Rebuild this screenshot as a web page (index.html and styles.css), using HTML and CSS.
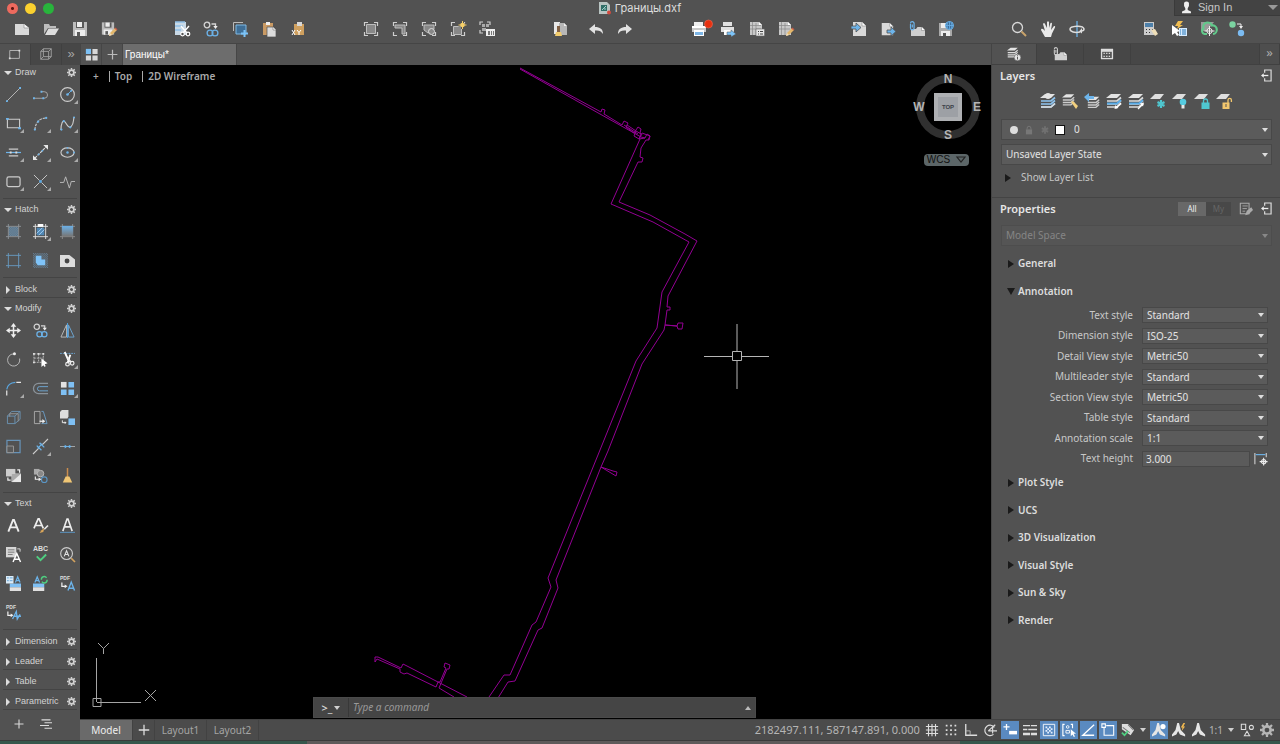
FILE: index.html
```html
<!DOCTYPE html>
<html lang="en">
<head>
<meta charset="utf-8">
<title>Границы.dxf</title>
<link rel="stylesheet" href="styles.css">
</head>
<body>
<svg class="defs" aria-hidden="true">
  <symbol id="gear" viewBox="0 0 16 16"><circle cx="8" cy="8" r="4.2" fill="none" stroke="currentColor" stroke-width="3"/><path d="M8 0v3M8 13v3M0 8h3M13 8h3M2.3 2.3l2.2 2.2M11.5 11.5l2.2 2.2M2.3 13.7l2.2-2.2M11.5 4.5l2.2-2.2" stroke="currentColor" stroke-width="2.6"/></symbol>
  <symbol id="plus" viewBox="0 0 16 16"><path d="M8 2v12M2 8h12" stroke="currentColor" stroke-width="1.5"/></symbol>
  <symbol id="new" viewBox="0 0 16 16"><path d="M1 3h9l5 4v7H1z" fill="#d9d9d9"/><path d="M10 3v4h5" fill="#f5f5f5" stroke="#888" stroke-width=".6"/></symbol>
  <symbol id="open" viewBox="0 0 16 16"><path d="M1 13V3h5l1 2h6v2H5z" fill="#bdbdbd"/><path d="M5.5 7.5H16L12 14H2z" fill="#dedede"/></symbol>
  <symbol id="save" viewBox="0 0 16 16"><path d="M1 1h14v14H1z" fill="#bcbcbc"/><path d="M4 1h8v6H4z" fill="#5a5a5a"/><path d="M5 1h5v5H5zM3 9h10v6H3z" fill="#ededed"/><path d="M5 11h3v4H5z" fill="#5a5a5a"/></symbol>
  <symbol id="pencil" viewBox="0 0 16 16"><path d="M8 15l1-3 5-5 2 2-5 5z" fill="#e3b76b"/><path d="M14 7l2 2" stroke="#c75b4a" stroke-width="1.4"/><path d="M8 15l1-3 2 2z" fill="#f2dfbd"/></symbol>
  <symbol id="saveas" viewBox="0 0 16 16"><use href="#save" width="14" height="15"/><use href="#pencil"/></symbol>
  <symbol id="cut" viewBox="0 0 16 16"><path d="M1 1h11v13H1z" fill="#c9d9e6"/><path d="M1 1h10M1 5h8M1 9h6" stroke="#8fbfe6" stroke-width="1.5"/><path d="M7 5l6 7M15 5l-6 7" stroke="#fff" stroke-width="1.4"/><circle cx="8.5" cy="13" r="1.8" fill="#525252" stroke="#fff" stroke-width="1.2"/><circle cx="14" cy="13" r="1.8" fill="#525252" stroke="#fff" stroke-width="1.2"/></symbol>
  <symbol id="copy" viewBox="0 0 16 16"><g fill="none" stroke-width="1.3"><circle cx="4" cy="4" r="2.8" stroke="#d5d5d5"/><path d="M8.500 3h4v3" stroke="#d5d5d5"/><circle cx="7" cy="12" r="2.9" stroke="#6cb2e8"/><circle cx="12" cy="12" r="2.9" stroke="#6cb2e8"/></g><path d="M10.300 5h4.400l-2.200 3z" fill="#eee"/></symbol>
  <symbol id="copybase" viewBox="0 0 16 16"><path d="M1.500 10V1.500H11" fill="none" stroke="#bbb"/><path d="M4 4h10v9H4z" fill="#3f6f97" stroke="#7fb9e4"/><path d="M12.500 9v7M9 12.500h7" stroke="#7cc3f7" stroke-width="2"/></symbol>
  <symbol id="paste" viewBox="0 0 16 16"><path d="M2 2h10v12H2z" fill="#c99a64"/><path d="M5 1h4v3H5z" fill="#eee"/><path d="M6 6h6l3 3v7H6z" fill="#dcdcdc" stroke="#525252" stroke-width=".7"/><path d="M12 6v3h3" fill="#fff" stroke="#777" stroke-width=".6"/></symbol>
  <symbol id="pastexy" viewBox="0 0 16 16"><path d="M4 3h10v11H4z" fill="#cfa05f"/><path d="M7 1h5v4H7z" fill="#d7d7d7"/><path d="M2 9l3 5M5 9l-3 5M7 9l2 2.500L11 9M9 11.500V14" stroke="#fff" stroke-width="1" fill="none"/></symbol>
  <symbol id="corners" viewBox="0 0 16 16"><path d="M1.500 5V1.500H5M11 1.500h3.500V5M14.500 11v3.500H11M5 14.500H1.500V11" fill="none" stroke="#cfcfcf" stroke-width="1.200"/></symbol>
  <symbol id="blk1" viewBox="0 0 16 16"><use href="#corners"/><path d="M3.500 3.500h9v9h-9z" fill="#888" stroke="#bdbdbd"/></symbol>
  <symbol id="blk2" viewBox="0 0 16 16"><use href="#corners"/><path d="M3 4h10v9h-3V7H3z" fill="#888" stroke="#bdbdbd"/></symbol>
  <symbol id="blk3" viewBox="0 0 16 16"><use href="#corners"/><path d="M3 4h10v4L7 12l-4-3z" fill="#888" stroke="#bdbdbd"/><circle cx="10.500" cy="10.500" r="3" fill="#888" stroke="#ddd"/></symbol>
  <symbol id="blk4" viewBox="0 0 16 16"><use href="#corners"/><path d="M3.500 5.500h8v8h-8z" fill="#888" stroke="#bdbdbd"/><path d="M12.500 0v8M8.500 4h8" stroke="#525252" stroke-width="3"/><circle cx="12.500" cy="4" r="2.300" fill="#f5cf6a"/><path d="M12.500 0v8M8.500 4h8" stroke="#f5cf6a"/></symbol>
  <symbol id="blk5" viewBox="0 0 16 16"><path d="M1 4V1h3M8 1h3v3M1 9v3h3" fill="none" stroke="#cfcfcf" stroke-width="1.200"/><path d="M3 3h3v3H3zM7 3h3v3H7zM3 7h4v3H3z" fill="#aaa"/><path d="M7 8h9v7H7z" fill="#eee"/><path d="M9 10h2v4H9zM12 10h1v4h-1zM14 10h1v4h-1z" fill="#777"/></symbol>
  <symbol id="match" viewBox="0 0 16 16"><path d="M2 1h6v12H2z" fill="#e8e8e8"/><path d="M7 2h5l3 3v9H7z" fill="#b7b7b7"/><path d="M12 2v3h3" fill="#eee"/><path d="M5 5h3v6H5z" fill="#805f43"/><path d="M4 11h5l1 4H3z" fill="#f1cb6c"/></symbol>
  <symbol id="undo" viewBox="0 0 16 16"><path d="M1 8l6-5v3c5 0 8 2 8 7-2-3-4-4-8-3.500V13z" fill="#e2e2e2"/></symbol>
  <symbol id="redo" viewBox="0 0 16 16"><path d="M15 8L9 3v3c-5 0-8 2-8 7 2-3 4-4 8-3.500V13z" fill="#e2e2e2"/></symbol>
  <symbol id="print" viewBox="0 0 16 16"><path d="M3 1h9v4H3z" fill="#eee"/><path d="M1 5h14v6H1z" fill="#c9c9c9"/><path d="M1 5h14v2H1z" fill="#fff"/><path d="M3 9h10v6H3z" fill="#fff"/><path d="M4 11h8v3H4z" fill="#7db6e6"/></symbol>
  <symbol id="printdot" viewBox="0 0 22 16"><use href="#print" width="16" height="16"/><circle cx="17.500" cy="3" r="4" fill="#e8310f" stroke="#f06b55" stroke-width=".6"/></symbol>
  <symbol id="printgo" viewBox="0 0 16 16"><path d="M3 1h9v4H3zM1 6h13v5H1z" fill="#e0e0e0"/><path d="M4 9h8v5H4z" fill="#fff"/><path d="M7 11h4V9l5 4-5 3v-2H7z" fill="#7cc3f7" stroke="#525252" stroke-width=".5"/></symbol>
  <symbol id="page" viewBox="0 0 16 16"><path d="M1 1h9l3 3v10H1z" fill="#c8c8c8"/><path d="M3.500 1v13M1 4.500h11M7 2v12M1 8h11" stroke="#888" stroke-width=".7"/><path d="M10 1v3h3" fill="#fff"/></symbol>
  <symbol id="pagesetup" viewBox="0 0 16 16"><use href="#page"/><path d="M7 8h8.500v7H7z" fill="#e8e8e8" stroke="#666" stroke-width=".6"/><path d="M9 10.500h1M9 13h1M11 10.500h3M11 13h3" stroke="#444"/></symbol>
  <symbol id="pageedit" viewBox="0 0 16 16"><use href="#page"/><use href="#pencil"/></symbol>
  <symbol id="sheet" viewBox="0 0 16 16"><path d="M2 1h9l4 4v10H2z" fill="#d9d9d9"/><path d="M11 1v4h4" fill="#fff" stroke="#888" stroke-width=".6"/></symbol>
  <symbol id="import" viewBox="0 0 16 16"><use href="#sheet"/><path d="M0 5h5V2l5 4.500L5 11V8H0z" fill="#6db4ea" stroke="#525252" stroke-width=".8"/></symbol>
  <symbol id="export" viewBox="0 0 16 16"><use href="#sheet" width="14" height="16"/><path d="M7 9h4V6l5 4.500L11 15v-3H7z" fill="#6db4ea" stroke="#525252" stroke-width=".8"/></symbol>
  <symbol id="attach" viewBox="0 0 16 16"><path d="M2 8h5l1.500-2H13l3 3v6H2z" fill="#cfcfcf"/><path d="M12.500 6v3.500H16" fill="#fff" stroke="#777" stroke-width=".5"/><path d="M1.500 3v4a1.800 1.800 0 0 0 3.600 0V2.500a1.800 1.800 0 0 0-3.600 0M3.300 3.500v3" fill="none" stroke="currentColor" stroke-width="1.200"/></symbol>
  <symbol id="saveweb" viewBox="0 0 16 16"><path d="M1 2h13v13H1z" fill="#aaa"/><path d="M3 2h6v5H3zM3 10h9v5H3z" fill="#ededed"/><path d="M5 12h3v3H5z" fill="#555"/><circle cx="11.500" cy="4.500" r="4" fill="#3c6f9d" stroke="#6db4ea"/><path d="M7.500 4.500h8M11.500.5v8M9.500 2q-1 2.500 0 5M13.500 2q1 2.500 0 5" stroke="#6db4ea" stroke-width=".8" fill="none"/></symbol>
  <symbol id="mag" viewBox="0 0 16 16"><circle cx="6.500" cy="6.500" r="5" fill="none" stroke="#d8d8d8" stroke-width="1.300"/><path d="M10.500 10.500L15 15" stroke="#c9a36b" stroke-width="2"/></symbol>
  <symbol id="hand" viewBox="0 0 16 16"><path d="M5 16L1 9q0-2 2-1l2 2-2-7q1-2 2 0l2 4V1q1-1.500 2 0v6l1.500-5q1.500-1 1.500.7L11 9l3-4q1.700-.5 1 1.500l-3 6-1 3.500z" fill="#e9e9e9"/></symbol>
  <symbol id="orbit" viewBox="0 0 16 16"><path d="M8 0v16" stroke="#6db4ea" stroke-width="1.300"/><path d="M11 11c-5 1-10 0-10-3s13-4.500 14 0c0 1-1 2-3 2" fill="none" stroke="#ddd" stroke-width="1.500"/><path d="M13 7l-3 3.500 3 2z" fill="#ddd"/></symbol>
  <symbol id="calc" viewBox="0 0 16 16"><path d="M2 1h10v13H2z" fill="#ccc"/><path d="M3 2h8v4H3z" fill="#4d80aa"/><path d="M4 8h1v1H4zM7 8h1v1H7zM4 11h1v1H4zM7 11h1v1H7zM10 8h1v1h-1z" fill="#333"/><path d="M9 9l4 6 3-2-3-5z" fill="#f0dfb8"/></symbol>
  <symbol id="qsel" viewBox="0 0 16 16"><path d="M7 0h5L9 4h3L6 8l1-3H4z" fill="#f0bd51"/><path d="M1 4v10l3-2 2 3 2-1-2-3 3-1z" fill="#fff"/><path d="M8 7h8v8H8z" fill="#d7ecff"/><path d="M9 9h1M9 11h1M9 13h1M11 9h4M11 11h4M11 13h4" stroke="#2a78b8"/></symbol>
  <symbol id="geo" viewBox="0 0 16 16"><path d="M1 1h13L7 10H1z" fill="#9a9a9a"/><path d="M7 13H4.500a3 3 0 0 1-1-5.500 4.500 4.500 0 0 1 8.500-3 3.500 3.500 0 0 1 1 8.500" fill="none" stroke="#62c98b" stroke-width="2.200"/><circle cx="9.500" cy="10" r="2.600" fill="none" stroke="#eee"/><path d="M9.500 5v10M4.500 10h10" stroke="#eee"/></symbol>
  <symbol id="compare" viewBox="0 0 16 16"><circle cx="3.500" cy="3.500" r="3.200" fill="#7bd3a0"/><circle cx="12" cy="12" r="3.200" fill="#7cbcf2"/><path d="M8 3h4v3" fill="none" stroke="#eee"/><path d="M10 5h4l-2 3z" fill="#eee"/></symbol>
  <symbol id="rectt" viewBox="0 0 16 16"><path d="M2 4h11v9H2z" fill="none" stroke="#bdbdbd"/><path d="M1 12h2v2H1zM12 3h2v2h-2z" fill="#ddd"/></symbol>
  <symbol id="cube" viewBox="0 0 16 16"><path d="M2 5h9v9H2zM5 2h9v9H5zM2 5l3-3M11 5l3-3M11 14l3-3M2 14l3-3" fill="none" stroke="currentColor"/></symbol>
  <symbol id="grid4" viewBox="0 0 16 16"><path d="M2 2h5.500v5.500H2z" fill="#7cc0f5"/><path d="M9 2h5.500v5.500H9zM2 9h5.500v5.500H2zM9 9h5.500v5.500H9z" fill="currentColor"/></symbol>
  <symbol id="line" viewBox="0 0 16 16"><path d="M1 15L15 1" stroke="#bbb"/><path d="M0 14h2v2H0zM14 0h2v2h-2z" fill="#6db4ea"/></symbol>
  <symbol id="pline" viewBox="0 0 16 16"><path d="M1 12h11a3.500 3.500 0 0 0 0-7H9" stroke="#aaa" fill="none"/><path d="M0 11h2v2H0zM10 11h2v2h-2zM8 4h2v2H8z" fill="#6db4ea"/></symbol>
  <symbol id="circle" viewBox="0 0 16 16"><circle cx="8" cy="8" r="7.300" fill="none" stroke="#ccc" stroke-width="1.200"/><path d="M8 8l4-4" stroke="#6db4ea"/><circle cx="8" cy="8" r="1.400" fill="#6db4ea"/><circle cx="12" cy="4" r="1" fill="#6db4ea"/></symbol>
  <symbol id="rect" viewBox="0 0 16 16"><path d="M1.500 3.500h13v9h-13z" fill="none" stroke="#ccc" stroke-width="1.200"/><path d="M0 2h3v2H0zM13 12h3v2h-3z" fill="#6db4ea"/></symbol>
  <symbol id="arc" viewBox="0 0 16 16"><path d="M2 15Q3 2 15 2" fill="none" stroke="#ccc" stroke-width="1.200" stroke-dasharray="3 1"/><circle cx="2" cy="14.500" r="1.200" fill="#6db4ea"/><circle cx="5.500" cy="6" r="1.200" fill="#6db4ea"/><circle cx="14" cy="2" r="1.200" fill="#6db4ea"/></symbol>
  <symbol id="spline" viewBox="0 0 16 16"><path d="M1 15C1 8 3 4 5 6s4 8 7 5 2-6 3-10" fill="none" stroke="#ccc" stroke-width="1.200"/><circle cx="1.500" cy="14.500" r="1.200" fill="#6db4ea"/><circle cx="4" cy="5.500" r="1.200" fill="#6db4ea"/><circle cx="11" cy="12" r="1.200" fill="#6db4ea"/><circle cx="15" cy="1.500" r="1" fill="#6db4ea"/></symbol>
  <symbol id="mline" viewBox="0 0 16 16"><path d="M3 4.500h10M3 11.500h10" stroke="#ccc" stroke-width="1.300"/><path d="M0 8h16" stroke="#6db4ea" stroke-width="1.300"/><path d="M4 8h2M10 8h2" stroke="#ddd" stroke-width="2"/></symbol>
  <symbol id="xline" viewBox="0 0 16 16"><path d="M2 14L14 2" stroke="#ddd" stroke-width="1.200" stroke-dasharray="3 1"/><path d="M0 16v-5l5 5zM16 0v5l-5-5z" fill="#e6e6e6"/><circle cx="6" cy="10" r="1" fill="#6db4ea"/><circle cx="10" cy="6" r="1" fill="#6db4ea"/></symbol>
  <symbol id="ellipse" viewBox="0 0 16 16"><ellipse cx="8" cy="8" rx="7" ry="5" fill="none" stroke="#ccc" stroke-width="1.200"/><circle cx="8" cy="8" r="1.300" fill="#6db4ea"/><circle cx="8" cy="3" r="1" fill="#6db4ea"/><circle cx="15" cy="8" r="1" fill="#6db4ea"/></symbol>
  <symbol id="revcloud" viewBox="0 0 16 16"><rect x="1" y="3" width="14" height="10.500" rx="2" fill="none" stroke="#ccc" stroke-width="1.300"/></symbol>
  <symbol id="cross" viewBox="0 0 16 16"><path d="M1 1l6 6M9 7l6-6M7 9l-6 6M9 9l6 6" stroke="#ccc"/><circle cx="8" cy="8" r="1.500" fill="#5aa5de"/></symbol>
  <symbol id="breakl" viewBox="0 0 16 16"><path d="M0 9h4l2-6 4 12 2-7h4" fill="none" stroke="#bbb"/></symbol>
  <symbol id="frame" viewBox="0 0 16 16"><path d="M0 2.500h16M0 13.500h16M2.500 0v16M13.500 0v16" stroke="currentColor"/></symbol>
  <pattern id="dots" width="2" height="2" patternUnits="userSpaceOnUse"><path d="M0 0h1v1H0zM1 1h1v1H1z" fill="#76aad4"/></pattern>
  <linearGradient id="fade" x2="0" y2="1"><stop stop-color="#6cb0e6"/><stop offset="1" stop-color="#777"/></linearGradient>
  <symbol id="h1" viewBox="0 0 16 16"><path d="M3 3h10v10H3z" fill="url(#dots)"/><use href="#frame" color="#8d9298"/></symbol>
  <symbol id="h2" viewBox="0 0 16 16"><path d="M4 4h8v8H4z" fill="#4f86b3"/><path d="M4 10l6-6M6 12l6-6" stroke="#a9d4f6"/><use href="#frame" color="#ddd"/><path d="M5 0h6v3H5z" fill="#fff"/></symbol>
  <symbol id="h3" viewBox="0 0 16 16"><use href="#frame" color="#8d8d8d"/><path d="M2 2h12v11H2z" fill="url(#fade)"/></symbol>
  <symbol id="h4" viewBox="0 0 16 16"><use href="#frame" color="#6699bf"/></symbol>
  <symbol id="h5" viewBox="0 0 16 16"><path d="M0 0h16v16H0z" fill="url(#dots)" opacity=".5"/><path d="M3 3h6v4h4v6H5l-2-3z" fill="#7fc3f8"/></symbol>
  <symbol id="h6" viewBox="0 0 16 16"><path d="M0 2h10l6 5v8H0z" fill="#dcdcdc"/><circle cx="7.500" cy="8.500" r="2.600" fill="#444"/></symbol>
  <symbol id="move" viewBox="0 0 16 16"><path d="M8 2v12M2 8h12" stroke="#eee" stroke-width="1.600"/><path d="M8 0l3 4H5zM8 16l3-4H5zM0 8l4-3v6zM16 8l-4-3v6z" fill="#eee"/></symbol>
  <symbol id="mirror" viewBox="0 0 16 16"><path d="M7 2v13H1z" fill="none" stroke="#bbb"/><path d="M9 2v13h6z" fill="none" stroke="#6da6d3"/><path d="M8 0v16" stroke="#4fa4e4"/></symbol>
  <symbol id="rotate" viewBox="0 0 16 16"><path d="M8 2a6.500 6.500 0 1 0 6.500 5" fill="none" stroke="#bbb"/><circle cx="9" cy="1.800" r="1.600" fill="#eee"/></symbol>
  <symbol id="stretch" viewBox="0 0 16 16"><path d="M1 2h10v9H1zM6 2v9M1 6.500h10" fill="none" stroke="#bbb" stroke-dasharray="2 1"/><path d="M9 7v9l2-2 1.500 2 1-1-1-2 3-1z" fill="#fff"/><path d="M0 1h2v2H0zM5 1h2v2H5zM10 1h2v2h-2zM0 10h2v2H0z" fill="#ddd"/></symbol>
  <symbol id="trim" viewBox="0 0 16 16"><path d="M0 1.500h16" stroke="#6da6d3" stroke-dasharray="2 1"/><path d="M5 0l5 11M11 3L8 12" stroke="#fff" stroke-width="2"/><circle cx="8" cy="13" r="1.900" fill="none" stroke="#eee" stroke-width="1.300"/><circle cx="13" cy="12" r="1.900" fill="none" stroke="#eee" stroke-width="1.300"/><path d="M8 6l4 5" stroke="#eee" stroke-width="1.500"/></symbol>
  <symbol id="fillet" viewBox="0 0 16 16"><path d="M.8 15.500V10M11 1.500h5" stroke="#e5e5e5" stroke-width="1.300"/><path d="M.8 9Q2 2 10 1.500" fill="none" stroke="#5aa5de" stroke-width="1.300"/></symbol>
  <symbol id="offset" viewBox="0 0 16 16"><path d="M16 2.500H6a5.500 5.500 0 0 0 0 11h10" fill="none" stroke="#8a9299" stroke-width="1.400"/><path d="M16 6H7a2.200 2.200 0 0 0 0 4.500h9" fill="none" stroke="#6da6d3"/></symbol>
  <symbol id="array" viewBox="0 0 16 16"><path d="M1 1h6v6H1z" fill="#e3e3e3"/><path d="M9 1h6v6H9zM1 9h6v6H1zM9 9h6v6H9z" fill="#7fc0f4"/></symbol>
  <symbol id="box3" viewBox="0 0 16 16"><path d="M1.500 6.500h8v8h-8zM1.500 6.500L6 1.500h9l-5.500 5M15 1.500V10l-5.500 4.500" fill="none" stroke="#6c93b3"/><path d="M4 7V4h9v8" fill="none" stroke="#999"/></symbol>
  <symbol id="door" viewBox="0 0 16 16"><path d="M1.500 1.500h6v13h-6z" fill="none" stroke="#aaa"/><path d="M9 1.500h2l4 13H9" fill="none" stroke="#6b9cc3"/><path d="M7 12h5" stroke="#eee" stroke-width="1.300"/><path d="M10 9.500l3 2.500-3 2.500z" fill="#eee"/></symbol>
  <symbol id="boxes" viewBox="0 0 16 16"><path d="M0 2l2-2h7v7l-1 2H0z" fill="#ddd"/><path d="M9 9h7v7H9z" fill="#7fc0f4"/><path d="M2.500 11v2.500H6" stroke="#eee" fill="none"/><path d="M5 12l2 1.500L5 15z" fill="#eee"/></symbol>
  <symbol id="scale" viewBox="0 0 16 16"><path d="M1 1.500h14v13H1z" fill="none" stroke="#6793b8" stroke-width="1.300"/><path d="M1 7.500h7v7H1z" fill="#5a5a5a" stroke="#999"/></symbol>
  <symbol id="break" viewBox="0 0 16 16"><path d="M0 16l6-6M10 6l6-6" stroke="#ccc" stroke-width="1.200"/><path d="M4 7l5 5M7 4l5 5M5 10l5-5" stroke="#6db4ea" stroke-width="1.300"/></symbol>
  <symbol id="join" viewBox="0 0 16 16"><path d="M0 8h5M11 8h5" stroke="#aaa"/><path d="M5 6l3 2-3 2zM11 6L8 8l3 2z" fill="#6db4ea"/><path d="M4 8h8" stroke="#6db4ea"/></symbol>
  <symbol id="fliph" viewBox="0 0 16 16"><path d="M0 1h10v8H0z" fill="#ccc"/><path d="M6 6h10v9H6z" fill="#e8e8e8"/><path d="M6 6h10L6 15" fill="#aaa"/><path d="M12 2h2.500v3M2 10v3h3" stroke="#eee" fill="none" stroke-width="1.300"/></symbol>
  <symbol id="ovl" viewBox="0 0 16 16"><path d="M1 1h6v6H1z" fill="#aaa"/><circle cx="8" cy="6" r="3.500" fill="#888" stroke="#bbb"/><circle cx="12" cy="12.500" r="3" fill="none" stroke="#5a95c4" stroke-width="1.200"/><path d="M2.500 9v3H7" stroke="#eee" fill="none" stroke-width="1.200"/><path d="M6 10l3 2-3 2z" fill="#eee"/></symbol>
  <symbol id="broom" viewBox="0 0 16 16"><path d="M8 0v10" stroke="#c98c4d" stroke-width="1.600"/><path d="M6 9h4l3 6.500H3z" fill="#f0c675"/></symbol>
  <symbol id="tA" viewBox="0 0 16 16"><path d="M2.500 14.500L7.500 2h1l5 12.500M4.500 10h7" fill="none" stroke="#eee" stroke-width="2"/></symbol>
  <symbol id="tAbrush" viewBox="0 0 16 16"><path d="M1 11L5.500 1h1L11 11M2.500 8h7" fill="none" stroke="#eee" stroke-width="1.800"/><path d="M16 8l-4 4" stroke="#e8e8e8" stroke-width="1.800"/><path d="M12 11l-1 4-4 1 2-3z" fill="#d9a55a"/></symbol>
  <symbol id="tAline" viewBox="0 0 16 16"><path d="M3 14L7.500 1h1L13 14M4.500 9.500h7" fill="none" stroke="#eee" stroke-width="1.700"/><path d="M0 15.300h16" stroke="#5a95c4"/></symbol>
  <symbol id="tdoc" viewBox="0 0 16 16"><path d="M0 0h11v11H0z" fill="#d6d6d6"/><path d="M2 3h7M2 5.500h7M2 8h5" stroke="#777"/><path d="M12 2h3v3" stroke="#ddd" fill="none"/><path d="M7.500 16l4-9 4 9M9 13h5" fill="none" stroke="#fff" stroke-width="1.500"/></symbol>
  <symbol id="check" viewBox="0 0 16 16"><path d="M4 10l4 4 6-6" fill="none" stroke="#4fcf80" stroke-width="2"/></symbol>
  <symbol id="findA" viewBox="0 0 16 16"><circle cx="7" cy="7" r="6.300" fill="none" stroke="#ccc" stroke-width="1.200"/><path d="M4.500 10L7 4l2.500 6M5.500 8h3" fill="none" stroke="#ddd" stroke-width="1.200"/><path d="M12 12l4 4" stroke="#d4a35e" stroke-width="1.800"/></symbol>
  <symbol id="fieldA" viewBox="0 0 16 16"><path d="M4 8h12v4H4z" fill="#7fc0f4"/><path d="M4 12h12v4H4z" fill="#e0e0e0"/><path d="M0 0h8v8H0z" fill="#dcecf8"/><path d="M1 2h2M1 5h2M4 2h3M4 5h3" stroke="#5f9fd2"/><path d="M10 7l2.500-6L15 7M11 5h3" stroke="#6db4ea" stroke-width="1.300" fill="none"/></symbol>
  <symbol id="updA" viewBox="0 0 16 16"><path d="M0 8h12v4H0z" fill="#7fc0f4"/><path d="M0 12h12v4H0z" fill="#e0e0e0"/><path d="M2 7l2.500-6L7 7M3 5h3" stroke="#6db4ea" stroke-width="1.300" fill="none"/><path d="M9 4a3 3 0 0 1 5.500-2M15 4a3 3 0 0 1-5.500 2" fill="none" stroke="#4fcf80" stroke-width="1.500"/></symbol>
  <symbol id="pdfA" viewBox="0 0 16 16"><path d="M2 7v4h4" stroke="#eee" fill="none" stroke-width="1.300"/><path d="M5 9l3 2-3 2z" fill="#eee"/><path d="M8.500 15.500L12 6.500l3.500 9M10 13h4" fill="none" stroke="#6db4ea" stroke-width="1.500"/></symbol>
  <symbol id="pdfB" viewBox="0 0 16 16"><path d="M2 7v4h4" stroke="#eee" fill="none" stroke-width="1.300"/><path d="M5 9l3 2-3 2z" fill="#eee"/><path d="M7 15l4-8 1 8 3-5M8 12h8" fill="none" stroke="#6db4ea" stroke-width="1.400"/></symbol>
  <symbol id="lines" viewBox="0 0 16 16"><path d="M2 2.500h12M6 6.300h10M0 10h12M6 13.700h10" stroke="#ddd" stroke-width="1.500"/></symbol>
  <symbol id="stk" viewBox="0 0 16 16"><path d="M5 1h10l-4 4H0z" fill="#e3e3e3"/><path d="M1 8h10l4-3.500M1 11h10l4-3.500M1 14h10l4-3.500" fill="none" stroke="currentColor" stroke-width="1.700"/></symbol>
  <symbol id="layinfo" viewBox="0 0 16 16"><use href="#stk" width="13" height="13" color="#ddd"/><circle cx="12" cy="12" r="3.800" fill="#e3e3e3" stroke="#525252" stroke-width=".6"/><path d="M12 9.500v1M12 11.300v3" stroke="#444"/></symbol>
  <symbol id="table" viewBox="0 0 16 16"><path d="M1 2h14v12H1z" fill="#ddd"/><path d="M2.500 5.500h11v7h-11z" fill="#555"/><path d="M4 6.500h1.500V8H4zM7 6.500h1.500V8H7zM10 6.500h1.500V8H10zM4 10h1.500v1.500H4zM7 10h1.500v1.500H7zM10 10h1.500v1.500H10z" fill="#ddd"/></symbol>
  <symbol id="dock" viewBox="0 0 12 14"><path d="M4 4V1h7v12H4v-3" fill="none" stroke="#ddd" stroke-width="1.300"/><path d="M2 7h6" stroke="#eee" stroke-width="1.400"/><path d="M0 7l3-2.500v5z" fill="#eee"/></symbol>
  <symbol id="l1" viewBox="0 0 16 16"><use href="#stk" color="#8ec5f1"/><circle cx="8" cy="3" r="3" fill="#e5e5e5"/><path d="M1 14h10l4-3.500" fill="none" stroke="#ddd" stroke-width="1.500"/></symbol>
  <symbol id="l2" viewBox="0 0 16 16"><use href="#stk" color="#ccc" width="13" height="14"/><path d="M9 9l2-1 5 5-2 3z" fill="#f1cf7e"/></symbol>
  <symbol id="l3" viewBox="0 0 16 16"><use href="#stk" color="#ccc" x="3" y="3" width="13" height="13"/><path d="M0 4l5-4v3h5v3H5v3z" fill="#6db4ea"/></symbol>
  <symbol id="l4" viewBox="0 0 16 16"><use href="#stk" color="#ddd"/><path d="M1 10.500h10l4-3.500" fill="none" stroke="#5aaeea" stroke-width="1.800"/><path d="M15 10l-5 5" stroke="#fff" stroke-width="1.300"/><path d="M8.500 16l1-4 3 3z" fill="#fff"/></symbol>
  <symbol id="l5" viewBox="0 0 16 16"><use href="#stk" color="#ddd"/><path d="M1 10.500h10l4-3.500" fill="none" stroke="#5aaeea" stroke-width="1.800"/><path d="M10 16l5-5" stroke="#fff" stroke-width="1.300"/><path d="M16 9.500l-1 4-3-3z" fill="#fff"/></symbol>
  <symbol id="sheetl" viewBox="0 0 16 16"><path d="M5 1h9l-4 5H0z" fill="#dedede"/></symbol>
  <symbol id="l6" viewBox="0 0 16 16"><use href="#sheetl"/><path d="M11 7v8M7.500 9l7 4M14.500 9l-7 4" stroke="#4fc6cf" stroke-width="2.200"/></symbol>
  <symbol id="l7" viewBox="0 0 16 16"><use href="#sheetl"/><circle cx="11" cy="9" r="3.300" fill="#55cbe0"/><path d="M9.500 12h3v3.500h-3z" fill="#e8e8e8"/></symbol>
  <symbol id="l8" viewBox="0 0 16 16"><use href="#sheetl"/><path d="M7.500 9.500h8V16h-8z" fill="#4fc6cf"/><path d="M9.500 10V8a2 2 0 0 1 4 0v2" fill="none" stroke="#4fc6cf" stroke-width="1.300"/></symbol>
  <symbol id="l9" viewBox="0 0 16 16"><use href="#sheetl"/><path d="M6.500 9.500h7V16h-7z" fill="#f2c66d"/><path d="M12 10V7a1.700 1.700 0 0 1 3.400 0v2" fill="none" stroke="#f2c66d" stroke-width="1.300"/><path d="M9.500 11h1v3h-1z" fill="#555"/></symbol>
  <symbol id="lock" viewBox="0 0 16 16"><path d="M3 7h10v8H3z" fill="#777"/><path d="M5 7V5a3 3 0 0 1 6 0v2" fill="none" stroke="#777" stroke-width="1.500"/></symbol>
  <symbol id="snow" viewBox="0 0 16 16"><path d="M8 2v12M3 5l10 6M13 5L3 11" stroke="#707070" stroke-width="3"/></symbol>
  <symbol id="list" viewBox="0 0 16 16"><path d="M1.500 1.500h10v12h-10z" fill="none" stroke="#aaa" stroke-width="1.200"/><path d="M4 4.500h6M4 7.500h5M4 10.500h3" stroke="#aaa"/><path d="M7 15l2-5 5-4 2 3-5 5z" fill="#aaa"/></symbol>
  <symbol id="pick" viewBox="0 0 16 16"><path d="M1 1v13M14 1v5" stroke="#ccc" stroke-width="1.300"/><path d="M2 3h11" stroke="#6db4ea" stroke-width="1.300"/><circle cx="11" cy="11" r="2.500" fill="none" stroke="#eee" stroke-width="1.200"/><path d="M11 6.500v9M6.500 11h9" stroke="#eee" stroke-width="1.200"/></symbol>
  <symbol id="s1" viewBox="0 0 16 16"><path d="M4 1v14M8 1v14M12 1v14M1 4h14M1 8h14M1 12h14" stroke="#ddd" stroke-width="1.300"/></symbol>
  <symbol id="s2" viewBox="0 0 16 16"><path d="M2 3h13M2 8h13M2 13h13" stroke="#ddd" stroke-width="2" stroke-dasharray="2 3"/></symbol>
  <symbol id="s3" viewBox="0 0 16 16"><path d="M2 1v13h13" fill="none" stroke="#ddd" stroke-width="1.500"/><path d="M2 9h5v5" fill="none" stroke="#bbb"/></symbol>
  <symbol id="s4" viewBox="0 0 16 16"><path d="M12 13a6 6 0 1 1 1-8M6 9h10M6 9l8-7M11 5v7" fill="none" stroke="#ddd" stroke-width="1.300"/></symbol>
  <symbol id="s5" viewBox="0 0 16 16"><path d="M4 1v7M.5 4.500h7" stroke="#fff" stroke-width="1.500"/><path d="M7 9h9v4H7z" fill="#fff"/></symbol>
  <symbol id="s6" viewBox="0 0 16 16"><path d="M0 3h8M9 3h7M0 7.500h5M6 7.500h10" stroke="#ddd" stroke-width="1.700"/><path d="M0 12.500h8M9 12.500h7" stroke="#ddd" stroke-width="3"/></symbol>
  <symbol id="s7" viewBox="0 0 16 16"><path d="M1.500 1.500h13v13h-13z" fill="none" stroke="#fff"/><path d="M4 4h2v2H4zM8 4h2v2H8zM6 6h2v2H6zM10 6h2v2h-2zM4 8h2v2H4zM8 8h2v2H8zM6 10h2v2H6zM10 10h2v2h-2z" fill="#e4efff"/></symbol>
  <symbol id="s8" viewBox="0 0 16 16"><path d="M3 1.500H1v13h2M10 1.500h2V6" fill="none" stroke="#fff" stroke-width="1.300"/><circle cx="6.500" cy="4.500" r="1.500" fill="none" stroke="#fff"/><path d="M4.500 8.500h4v3h-4z" fill="none" stroke="#fff"/><path d="M10 7v8l2-2 1.500 3 1.300-.6-1.500-3H16z" fill="#fff"/></symbol>
  <symbol id="s9" viewBox="0 0 16 16"><path d="M15 2L2 14h13" fill="none" stroke="#fff" stroke-width="1.500"/></symbol>
  <symbol id="s10" viewBox="0 0 16 16"><path d="M3.500 5v9h11V3H6M1 1h4v4H1z" fill="none" stroke="#fff" stroke-width="1.200"/></symbol>
  <symbol id="tag" viewBox="0 0 16 16"><path d="M1 1h7l7 7-4 6L1 7z" fill="#ddd"/><path d="M2 5l8 6M8 2l6 6" stroke="#777" stroke-width="1.200"/><path d="M1 11l3 3 4-5" fill="none" stroke="#4fcf80" stroke-width="2"/></symbol>
  <symbol id="ann" viewBox="0 0 16 16"><path d="M6 0h2l2 8 5 5v2.500L9 13l-2-4-2 4-5 2.500V13l4-5z" fill="#e6e6e6"/></symbol>
  <symbol id="annc" viewBox="0 0 16 16"><use href="#ann"/><circle cx="12.500" cy="4" r="3" fill="#fff"/></symbol>
  <symbol id="annb" viewBox="0 0 16 16"><use href="#ann"/><path d="M13 0l-3 5h2l-1 4 4-5h-2l2-4z" fill="#f0b850"/></symbol>
  <symbol id="shapes" viewBox="0 0 16 16"><path d="M1.500 1.500h5v6h-5zM5 14.500l3-5 3 5z" fill="none" stroke="#ddd" stroke-width="1.200"/><circle cx="13" cy="5" r="2.300" fill="none" stroke="#ddd" stroke-width="1.200"/></symbol>
  <symbol id="user" viewBox="0 0 16 16"><path d="M5 2q3-3 6 0v4L9.500 9v2l4 2v2h-11v-2l4-2V9L5 6z" fill="#eee"/></symbol>
  <symbol id="dxf" viewBox="0 0 12 14"><path d="M0 1h8l3 3v9H0z" fill="#b8c4c2"/><path d="M2 4h6v6H2z" fill="#2f6d67"/><path d="M3 9l4-4M5 8h2" stroke="#9fd0c9"/><circle cx="10" cy="11.500" r="2" fill="#d14b40"/></symbol>
</svg>

<header class="top">
  <div class="titlebar">
    <div class="lights"><button class="light red" aria-label="Close"></button><button class="light yellow" aria-label="Minimise"></button><button class="light green" aria-label="Zoom"></button></div>
    <h1 class="title"><svg class="dxf"><use href="#dxf"/></svg>Границы.dxf</h1>
    <button class="signin"><svg class="i12"><use href="#user"/></svg><span>Sign In</span><i class="caret big"></i></button>
  </div>
  <nav class="toolbar" aria-label="Main toolbar">
    <div class="group"><button aria-label="New"><svg><use href="#new"/></svg></button><button aria-label="Open"><svg><use href="#open"/></svg></button><button aria-label="Save"><svg><use href="#save"/></svg></button><button aria-label="Save as"><svg><use href="#saveas"/></svg></button></div>
    <div class="group"><button aria-label="Cut"><svg><use href="#cut"/></svg></button><button aria-label="Copy"><svg><use href="#copy"/></svg></button><button aria-label="Copy with base"><svg><use href="#copybase"/></svg></button><button aria-label="Paste"><svg><use href="#paste"/></svg></button><button aria-label="Paste to coordinates"><svg><use href="#pastexy"/></svg></button></div>
    <div class="group"><button aria-label="Create block"><svg><use href="#blk1"/></svg></button><button aria-label="Edit block"><svg><use href="#blk2"/></svg></button><button aria-label="Reference"><svg><use href="#blk3"/></svg></button><button aria-label="New block"><svg><use href="#blk4"/></svg></button><button aria-label="Attributes"><svg><use href="#blk5"/></svg></button></div>
    <div class="group split"><button aria-label="Match properties"><svg><use href="#match"/></svg></button><div class="group"><button aria-label="Undo"><svg><use href="#undo"/></svg></button><button aria-label="Redo"><svg><use href="#redo"/></svg></button></div></div>
    <div class="group"><button aria-label="Print"><svg class="wide"><use href="#printdot"/></svg></button><button aria-label="Batch print"><svg><use href="#printgo"/></svg></button><button aria-label="Page setup"><svg><use href="#pagesetup"/></svg></button><button aria-label="Edit page"><svg><use href="#pageedit"/></svg></button></div>
    <div class="group blue"><button aria-label="Import"><svg><use href="#import"/></svg></button><button aria-label="Export"><svg><use href="#export"/></svg></button><button aria-label="Attach"><svg><use href="#attach"/></svg></button><button aria-label="Save to web"><svg><use href="#saveweb"/></svg></button></div>
    <div class="group"><button aria-label="Zoom"><svg><use href="#mag"/></svg></button><button aria-label="Pan"><svg><use href="#hand"/></svg></button><button aria-label="Orbit"><svg><use href="#orbit"/></svg></button></div>
    <div class="group"><button aria-label="Calculator"><svg><use href="#calc"/></svg></button><button aria-label="Quick select"><svg><use href="#qsel"/></svg></button><button aria-label="Geographic link"><svg><use href="#geo"/></svg></button><button aria-label="Compare"><svg><use href="#compare"/></svg></button></div>
  </nav>
</header>

<main class="work">
  <aside class="palette">
    <div class="ptabs"><button class="on" aria-label="Drafting"><svg><use href="#rectt"/></svg></button><button aria-label="Modelling"><svg><use href="#cube"/></svg></button><button class="more" aria-label="More">»</button></div>
    <section class="sec first"><h2><i class="tri down"></i>Draw<svg><use href="#gear"/></svg></h2>
      <div class="tools"><button aria-label="Line"><svg><use href="#line"/></svg></button><button aria-label="Polyline"><svg><use href="#pline"/></svg></button><button class="m" aria-label="Circle"><svg><use href="#circle"/></svg></button><button class="m" aria-label="Rectangle"><svg><use href="#rect"/></svg></button><button class="m" aria-label="Arc"><svg><use href="#arc"/></svg></button><button class="m" aria-label="Spline"><svg><use href="#spline"/></svg></button><button class="m" aria-label="Multiline"><svg><use href="#mline"/></svg></button><button class="m" aria-label="Ray"><svg><use href="#xline"/></svg></button><button class="m" aria-label="Ellipse"><svg><use href="#ellipse"/></svg></button><button class="m" aria-label="Revision cloud"><svg><use href="#revcloud"/></svg></button><button class="m" aria-label="Point"><svg><use href="#cross"/></svg></button><button aria-label="Break line"><svg><use href="#breakl"/></svg></button></div></section>
    <section class="sec"><h2><i class="tri down"></i>Hatch<svg><use href="#gear"/></svg></h2>
      <div class="tools"><button aria-label="Hatch"><svg><use href="#h1"/></svg></button><button class="m" aria-label="Edit hatch"><svg><use href="#h2"/></svg></button><button aria-label="Gradient"><svg><use href="#h3"/></svg></button><button aria-label="Boundary"><svg><use href="#h4"/></svg></button><button aria-label="Region"><svg><use href="#h5"/></svg></button><button aria-label="Wipeout"><svg><use href="#h6"/></svg></button></div></section>
    <section class="sec closed"><h2><i class="tri"></i>Block<svg><use href="#gear"/></svg></h2></section>
    <section class="sec"><h2><i class="tri down"></i>Modify<svg><use href="#gear"/></svg></h2>
      <div class="tools"><button aria-label="Move"><svg><use href="#move"/></svg></button><button aria-label="Copy"><svg><use href="#copy"/></svg></button><button aria-label="Mirror"><svg><use href="#mirror"/></svg></button><button aria-label="Rotate"><svg><use href="#rotate"/></svg></button><button aria-label="Stretch"><svg><use href="#stretch"/></svg></button><button class="m" aria-label="Trim"><svg><use href="#trim"/></svg></button><button class="m" aria-label="Fillet"><svg><use href="#fillet"/></svg></button><button aria-label="Offset"><svg><use href="#offset"/></svg></button><button class="m" aria-label="Array"><svg><use href="#array"/></svg></button><button aria-label="Solid edit"><svg><use href="#box3"/></svg></button><button aria-label="Extend"><svg><use href="#door"/></svg></button><button aria-label="Align"><svg><use href="#boxes"/></svg></button><button aria-label="Scale"><svg><use href="#scale"/></svg></button><button class="m" aria-label="Break"><svg><use href="#break"/></svg></button><button aria-label="Join"><svg><use href="#join"/></svg></button><button aria-label="Reverse"><svg><use href="#fliph"/></svg></button><button aria-label="Overkill"><svg><use href="#ovl"/></svg></button><button aria-label="Purge"><svg><use href="#broom"/></svg></button></div></section>
    <section class="sec"><h2><i class="tri down"></i>Text<svg><use href="#gear"/></svg></h2>
      <div class="tools"><button aria-label="Text"><svg><use href="#tA"/></svg></button><button aria-label="Text style"><svg><use href="#tAbrush"/></svg></button><button aria-label="Single line"><svg><use href="#tAline"/></svg></button><button aria-label="Multiline text"><svg><use href="#tdoc"/></svg></button><button class="lab" aria-label="Spelling"><span class="abc">ABC</span><svg><use href="#check"/></svg></button><button aria-label="Find"><svg><use href="#findA"/></svg></button><button aria-label="Field"><svg><use href="#fieldA"/></svg></button><button aria-label="Update field"><svg><use href="#updA"/></svg></button><button class="lab" aria-label="PDF text"><span>PDF</span><svg><use href="#pdfA"/></svg></button><button class="lab" aria-label="PDF recognition"><span>PDF</span><svg><use href="#pdfB"/></svg></button></div></section>
    <section class="sec closed"><h2><i class="tri"></i>Dimension<svg><use href="#gear"/></svg></h2></section>
    <section class="sec closed"><h2><i class="tri"></i>Leader<svg><use href="#gear"/></svg></h2></section>
    <section class="sec closed"><h2><i class="tri"></i>Table<svg><use href="#gear"/></svg></h2></section>
    <section class="sec closed"><h2><i class="tri"></i>Parametric<svg><use href="#gear"/></svg></h2></section>
    <div class="pfoot"><button aria-label="Add"><svg><use href="#plus"/></svg></button><button aria-label="Options"><svg><use href="#lines"/></svg></button></div>
  </aside>

  <div class="doctabs"><button class="start" aria-label="Start"><svg><use href="#grid4"/></svg></button><button class="add" aria-label="New tab"><svg><use href="#plus"/></svg></button><button class="doc">Границы*</button></div>

  <div class="canvas">
    <svg class="drawing" viewBox="80 65 911 654" preserveAspectRatio="xMinYMin slice" aria-label="Site boundary drawing">
      <g fill="none" stroke="#930093">
        <path d="M520 68l81 44 1-3 3 1-1 4 18 11 2-4 4 2-2 4 8 6 4-6 3 2-1 4 2 1-3 5 6-1 2-4 3 2-1 4-3 0-5 8-1 9 3 1-1 4-4 0-19 40 31 13 35 19 12 7-29 55-1 11 3 0 0 3-3 0-2 15 12 1 1-3 5 0 -1 6 -4 0-1-3-12-1-1 5-22 34-34 87-7 16 12 4 4 1-1 4-15-9-45 113 2 8-16 40-4 2-23 51-7 1-10 16"/>
        <path d="M520 69l80 45 34 19 7 4 4 1M624 125l14 9M627 125l9 6M636 131l5 3-2 5-5-3zM642 133l8 3-2 4M640 139l-29 65 42 18 36 20-27 50-5 36-21 33-36 89-52 128 3 9-15 35-4 3-22 50h-6l-15 22"/>
        <path d="M375 657l3 0 23 11 2-4 4 2 60 31M375 657v5l2-3 23 10v3l4 2 3-1 29 14 2-5h2l6-14-2-1 1-4 5 2-1 4h-2l-8 19 15 9"/>
      </g>
      <path d="M737 324v27M737 361v28M704 356.500h28M742 356.500h27M732.500 351.500h9v9h-9z" fill="none" stroke="#b5b5b5"/>
      <path d="M96.500 658v44M97 702.500h44M93 698.500h8v8h-8zM98 643l5.500 5.500L109 643M103.500 648.500V654M145 690l11 11M156 690l-11 11" fill="none" stroke="#a5a5a5"/>
    </svg>
    <div class="vlabels"><button>+</button><button>Top</button><button>2D Wireframe</button></div>
    <div class="compass"><span class="n">N</span><span class="w">W</span><span class="top-face">TOP</span><span class="e">E</span><span class="s">S</span></div>
    <button class="wcs">WCS<svg viewBox="0 0 10 8"><path d="M1 1h8L5 6z" fill="none" stroke="#222" stroke-width="1.200"/></svg></button>
    <form class="cmd"><button type="button" class="prompt">&gt;_<i class="caret"></i></button><input aria-label="Command" placeholder="Type a command"><button type="button" class="hist" aria-label="History"><i class="caret up"></i></button></form>
  </div>

  <aside class="panel">
    <div class="rtabs"><button class="on" aria-label="Layers"><svg><use href="#layinfo"/></svg></button><button aria-label="References"><svg><use href="#attach"/></svg></button><button aria-label="Sheets"><svg><use href="#table"/></svg></button><span></span><button class="more" aria-label="More">»</button></div>
    <section class="layers">
      <div class="head"><h2>Layers</h2><button aria-label="Undock layers"><svg class="dock"><use href="#dock"/></svg></button></div>
      <div class="ltools"><button aria-label="Layer states"><svg><use href="#l1"/></svg></button><button aria-label="Match"><svg><use href="#l2"/></svg></button><button aria-label="Previous"><svg><use href="#l3"/></svg></button><button aria-label="Isolate"><svg><use href="#l4"/></svg></button><button aria-label="Unisolate"><svg><use href="#l5"/></svg></button><button aria-label="Freeze"><svg><use href="#l6"/></svg></button><button aria-label="Off"><svg><use href="#l7"/></svg></button><button aria-label="Lock"><svg><use href="#l8"/></svg></button><button aria-label="Unlock"><svg><use href="#l9"/></svg></button></div>
      <div class="drop tall layer"><i class="bulb"></i><svg><use href="#lock"/></svg><svg><use href="#snow"/></svg><i class="swatch"></i><select aria-label="Current layer"><option>0</option></select></div>
      <div class="drop tall"><select aria-label="Layer state"><option>Unsaved Layer State</option></select></div>
      <button class="showlist"><i class="tri"></i>Show Layer List</button>
    </section>
    <section class="props">
      <div class="head"><h2>Properties</h2><div class="seg"><button class="on">All</button><button>My</button></div><button aria-label="Quick list"><svg class="i14"><use href="#list"/></svg></button><button aria-label="Undock properties"><svg class="dock"><use href="#dock"/></svg></button></div>
      <div class="drop tall off"><select aria-label="Selection" disabled><option>Model Space</option></select></div>
      <div class="folds two"><h3><i class="tri"></i>General</h3><h3><i class="tri down"></i>Annotation</h3></div>
      <div class="rows">
        <label for="f1">Text style</label><div class="drop"><select id="f1"><option>Standard</option></select></div>
        <label for="f2">Dimension style</label><div class="drop"><select id="f2"><option>ISO-25</option></select></div>
        <label for="f3">Detail View style</label><div class="drop"><select id="f3"><option>Metric50</option></select></div>
        <label for="f4">Multileader style</label><div class="drop"><select id="f4"><option>Standard</option></select></div>
        <label for="f5">Section View style</label><div class="drop"><select id="f5"><option>Metric50</option></select></div>
        <label for="f6">Table style</label><div class="drop"><select id="f6"><option>Standard</option></select></div>
        <label for="f7">Annotation scale</label><div class="drop"><select id="f7"><option>1:1</option></select></div>
        <label for="f8">Text height</label><div class="height"><input id="f8" value="3.000"><button aria-label="Pick height"><svg class="i14"><use href="#pick"/></svg></button></div>
      </div>
      <div class="folds six"><h3><i class="tri"></i>Plot Style</h3><h3><i class="tri"></i>UCS</h3><h3><i class="tri"></i>3D Visualization</h3><h3><i class="tri"></i>Visual Style</h3><h3><i class="tri"></i>Sun &amp; Sky</h3><h3><i class="tri"></i>Render</h3></div>
    </section>
  </aside>

  <footer class="status">
    <button class="lt on">Model</button><button class="lt plus" aria-label="Add layout"><svg><use href="#plus"/></svg></button><button class="lt">Layout1</button><button class="lt">Layout2</button>
    <output class="coords">2182497.111, 587147.891, 0.000</output>
    <div class="toggles"><button aria-label="Grid"><svg><use href="#s1"/></svg></button><button aria-label="Snap"><svg><use href="#s2"/></svg></button><button aria-label="Ortho"><svg><use href="#s3"/></svg></button><button aria-label="Polar"><svg><use href="#s4"/></svg></button><button class="on" aria-label="Dynamic input"><svg><use href="#s5"/></svg></button><button aria-label="Lineweight"><svg><use href="#s6"/></svg></button><button class="on" aria-label="Transparency"><svg><use href="#s7"/></svg></button><button class="on" aria-label="Selection cycling"><svg><use href="#s8"/></svg></button><button class="on" aria-label="Object tracking"><svg><use href="#s9"/></svg></button><button class="on" aria-label="Object snap"><svg><use href="#s10"/></svg></button></div>
    <div class="extra"><button aria-label="Monitor"><svg><use href="#tag"/></svg></button><i class="caret"></i></div>
    <div class="anno"><button class="on" aria-label="Annotation visibility"><svg><use href="#annc"/></svg></button><button aria-label="Auto scale"><svg><use href="#annb"/></svg></button><button aria-label="Scale"><svg><use href="#ann"/></svg></button></div>
    <button class="ratio">1:1<i class="caret"></i></button>
    <div class="anno"><button aria-label="Isolate objects"><svg><use href="#shapes"/></svg></button><button aria-label="Settings"><svg class="i12"><use href="#gear"/></svg></button></div>
  </footer>
</main>
<div class="desk"></div>
</body>
</html>
```
FILE: styles.css
```css
* { box-sizing: border-box; }
body {
  margin: 0;
  min-height: 100vh;
  display: flex;
  flex-direction: column;
  background: #525252;
  color: #d8d8d8;
  font: 11px/15px "Noto Sans", "Open Sans", sans-serif;
}
button, input, select {
  margin: 0;
  padding: 0;
  border: 0;
  background: none;
  color: inherit;
  font: inherit;
}
button { display: flex; align-items: center; justify-content: center; }
h1, h2, h3 { margin: 0; font-size: 11px; font-weight: 600; }
svg { width: 16px; height: 16px; flex: none; overflow: visible; }
symbol { overflow: visible; }
.defs { position: absolute; width: 0; height: 0; }
.i12 { width: 13px; height: 13px; }
.i14 { width: 14px; height: 14px; }
.dock { width: 11px; height: 13px; }

.caret { border: 3px solid transparent; border-top: 4px solid #d0d0d0; border-bottom: 0; }
.caret.up { border-top: 0; border-bottom: 4px solid #bbb; }
.caret.big { border-width: 5px 5px 0; border-top-color: #999; }
.tri { border: 4px solid transparent; border-left: 6px solid #ddd; border-right: 0; }

/* Title and main toolbar */
.titlebar { display: grid; grid-template-columns: 1fr auto 1fr; height: 15px; align-items: center; }
.lights { display: flex; gap: 7px; padding-left: 7px; }
.light { width: 11px; height: 11px; border-radius: 50%; }
.red { background: radial-gradient(circle, #5c1410 0 1px, #ed6a5e 2px); }
.yellow { background: #fbd12f; }
.green { background: #28b43c; }
.title { display: flex; gap: 4px; align-items: center; font: 11px/15px Inter, "Liberation Sans", sans-serif; color: #ddd; }
.dxf { width: 12px; height: 14px; }
.signin {
  justify-self: end;
  align-self: start;
  width: 106px;
  height: 16px;
  padding: 0 2px 0 5px;
  gap: 5px;
  background: #434343;
  border: solid #3a3a3a;
  border-width: 0 0 1px 1px;
  font: 11px/15px "Liberation Sans", sans-serif;
  color: #c6c6c6;
}
.signin span { flex: 1; text-align: left; }
.toolbar { display: flex; justify-content: space-between; align-items: center; height: 29px; padding: 0 33px 0 12px; border-bottom: 1px solid #454545; }
.group { display: flex; gap: 9px; }
.group.split { gap: 16px; }
.group.blue { color: #6db4ea; }
.toolbar button { width: 20px; height: 20px; }
.toolbar .wide { width: 22px; margin-left: 6px; }

/* Work area */
.work { flex: 1; display: grid; grid-template-columns: 80px minmax(0, 1fr) 289px; grid-template-rows: 21px 1fr 21px; }
.palette { grid-row: 1 / 4; display: flex; flex-direction: column; background: #525252; font: 9px/15px "Liberation Sans", sans-serif; }
.ptabs { display: grid; grid-template-columns: 30px 31px 19px; height: 21px; }
.ptabs button { background: #474747; border-left: 1px solid #404040; color: #a5a5a5; font-size: 13px; padding-bottom: 2px; }
.ptabs .on { background: #525252; border: 0; }
.ptabs svg { width: 14px; height: 14px; }
.sec { padding: 3px 0 2px; margin: 0 3px; border-bottom: 1px solid #444; }
.sec.first { padding-top: 0; }
.sec.closed { padding: 4px 0 0; }
.sec h2 { display: flex; align-items: center; height: 15px; padding: 0 1px; font-size: 9px; font-weight: 400; color: #d2d2d2; }
.sec h2 .tri { margin: 0 5px 0 2px; border-width: 4px 0 4px 4px; }
.sec h2 .tri.down { margin: 0 4px 0 0; border: 4px solid transparent; border-top: 4px solid #ddd; border-bottom: 0; }
.sec h2 .tri.down { border-width: 4px 4px 0; margin-right: 3px; }
.sec h2 svg { width: 9px; height: 9px; margin-left: auto; }
.tools { display: grid; grid-template-columns: repeat(3, 27px); grid-auto-rows: 29px; margin: 0 -3px; }
.tools button { position: relative; }
.tools svg { width: 15px; height: 15px; }
.tools .m::after { content: ""; position: absolute; right: 3px; bottom: 5px; border: solid transparent; border-width: 0 0 4px 4px; border-bottom-color: #aaa; }
.tools .lab span { position: absolute; top: 5px; left: 6px; font: bold 5px/8px "Liberation Sans", sans-serif; color: #ddd; }
.tools .lab .abc { font-size: 7px; }
.pfoot { display: flex; gap: 10px; margin-top: auto; height: 29px; padding: 0 0 4px 10px; }
.pfoot button { width: 17px; }
.pfoot svg { width: 12px; height: 12px; }

.doctabs { grid-column: 2; display: flex; border-left: 1px solid #454545; }
.doctabs button { border-right: 1px solid #464646; }
.doctabs .start { width: 21px; color: #d8d8d8; }
.doctabs .add { width: 21px; color: #bbb; }
.doctabs svg { width: 15px; height: 15px; }
.doctabs .add svg { width: 13px; height: 13px; }
.doctabs .doc { width: 114px; justify-content: flex-start; padding-left: 2px; background: #6d6d6d; color: #fff; font: 10px/15px "Liberation Sans", sans-serif; }

.canvas { grid-column: 2; position: relative; background: #000; overflow: hidden; }
.drawing { position: absolute; inset: 0; width: 100%; height: 100%; }
.vlabels { position: absolute; left: 13px; top: 4px; display: flex; color: #aaa; font-weight: 600; line-height: 14px; font-size: 10px; }
.vlabels button { height: 14px; padding-right: 5px; }
.vlabels button + button { padding-left: 5px; }
.vlabels button + button::before { content: ""; height: 11px; width: 1px; margin-right: 5px; background: #aaa; }
.compass {
  position: absolute;
  top: 10px;
  right: 11px;
  width: 64px;
  height: 64px;
  border: 8px solid #303030;
  border-radius: 50%;
  color: #b5b5b5;
  font: bold 12px/14px "Liberation Sans", sans-serif;
}
.compass span { position: absolute; width: 14px; text-align: center; }
.compass .n { top: -11px; left: 17px; }
.compass .s { bottom: -11px; left: 17px; }
.compass .w { top: 17px; left: -12px; }
.compass .e { top: 17px; right: -12px; }
.compass .top-face { top: 10px; left: 10px; width: 28px; height: 28px; border: 4px solid #aeb0b3; background: #9da0a5; color: #3c4148; font-size: 6px; line-height: 20px; }
.wcs { position: absolute; right: 22px; top: 89px; width: 45px; height: 12px; gap: 6px; border-radius: 4px; background: #5c6668; color: #111; font: 10px/12px "Liberation Sans", sans-serif; }
.wcs svg { width: 10px; height: 8px; }
.cmd { position: absolute; left: 233px; bottom: 1px; width: 443px; height: 21px; display: flex; background: #454545; border: 1px solid #4a4a4a; }
.cmd .prompt { width: 35px; gap: 2px; border-right: 1px solid #383838; font-weight: 600; }
.cmd input { flex: 1; min-width: 0; padding-left: 4px; font-style: italic; font-size: 10px; }
.cmd input::placeholder { color: #999; }
.cmd .hist { width: 14px; }

/* Right panel */
.panel { grid-column: 3; grid-row: 1 / 3; background: #525252; border-left: 1px solid #444; font-size: 10px; }
.rtabs { display: grid; grid-template-columns: 45px 47px 47px 1fr 21px; height: 21px; background: #474747; border-bottom: 1px solid #414141; }
.rtabs button { border-right: 1px solid #404040; color: #ccc; }
.rtabs .on { background: #525252; }
.rtabs .more { padding-bottom: 3px; font-size: 13px; color: #aaa; background: #4e4e4e; border-left: 1px solid #404040; }
.rtabs svg { width: 14px; height: 14px; }
.head { display: flex; align-items: center; gap: 8px; height: 21px; padding: 0 8px; }
.head h2 { flex: 1; color: #e6e6e6; }
.ltools { display: flex; justify-content: flex-end; gap: 6px; height: 29px; margin-bottom: 4px; padding-right: 48px; }
.layers { border-bottom: 1px solid #444; padding-bottom: 11px; }
.drop { position: relative; display: flex; align-items: center; height: 16px; background: #5b5b5b; border: 1px solid #484848; color: #e3e3e3; }
.drop::after { content: ""; position: absolute; right: 3px; border: solid transparent; border-width: 4px 3px 0; border-top-color: #ddd; pointer-events: none; }
.drop select { appearance: none; flex: 1; min-width: 0; height: 100%; padding-left: 4px; opacity: 1; }
.drop.tall { height: 21px; margin: 0 8px 4px 9px; }
.drop.off { color: #858585; background: #555; border-color: #4d4d4d; }
.drop.off::after { border-top-color: #888; }
.layer { gap: 6px; padding-left: 8px; }
.layer svg { width: 10px; height: 10px; }
.bulb { width: 8px; height: 8px; border-radius: 50%; background: #ddd; }
.swatch { width: 8px; height: 8px; background: #fff; outline: 1px solid #111; }
.panel .tri { border-left-color: #1a1a1a; }
.panel .tri.down { margin: 0 -1px; border: solid transparent; border-width: 7px 4px 0; border-top-color: #1a1a1a; }
.showlist { gap: 10px; height: 17px; margin-left: 13px; color: #c5c5c5; }
.props .head { margin-bottom: 6px; }
.seg { display: flex; font-size: 8px; line-height: 14px; }
.seg button { width: 25px; height: 14px; background: #484848; color: #666; }
.seg .on { width: 28px; background: #686868; color: #eee; }
.folds { display: grid; grid-auto-rows: 1fr; padding-left: 16px; }
.folds h3 { display: flex; align-items: center; gap: 4px; font-size: 10px; color: #ddd; }
.folds.two { min-height: 55px; }
.folds.six { min-height: 165px; }
.rows { display: grid; grid-template-columns: 141px minmax(0, 1fr); grid-auto-rows: 1fr; column-gap: 9px; align-items: center; min-height: 164px; padding-right: 12px; }
.rows label { text-align: right; color: #c8c8c8; }
.height { display: flex; gap: 4px; }
.height input { flex: 1; min-width: 0; height: 16px; padding-left: 3px; background: #5b5b5b; border: 1px solid #484848; color: #e3e3e3; }

/* Status bar */
.status { grid-column: 2 / 4; display: flex; align-items: stretch; background: #4b4b4b; border-top: 1px solid #424242; padding-right: 3px; color: #b5b5b5; }
.lt { width: 52px; border-right: 1px solid #424242; font-size: 10px; color: #a5a5a5; }
.lt.on { width: 53px; background: #6a6a6a; color: #eee; }
.lt.plus { width: 22px; }
.lt svg { width: 13px; height: 13px; color: #ddd; }
.coords { margin-left: auto; padding-right: 2px; line-height: 20px; }
.toggles { display: grid; grid-template-columns: repeat(10, 1fr); width: 196px; }
.toggles button, .anno button, .extra button { margin: 1px; }
.status .on:not(.lt) { background: #5a8ac0; }
.status svg { width: 14px; height: 14px; }
.extra { display: flex; align-items: center; gap: 2px; padding-right: 3px; }
.extra button { width: 18px; }
.anno { display: flex; }
.anno button { width: 18px; }
.ratio { gap: 5px; font-size: 10px; padding-right: 3px; }
.desk { height: 4px; background: linear-gradient(90deg, #36574c 24%, #5e5a5a 24% 75%, #36574c 75%); border-top: 1px solid #3a3a3a; }
```
